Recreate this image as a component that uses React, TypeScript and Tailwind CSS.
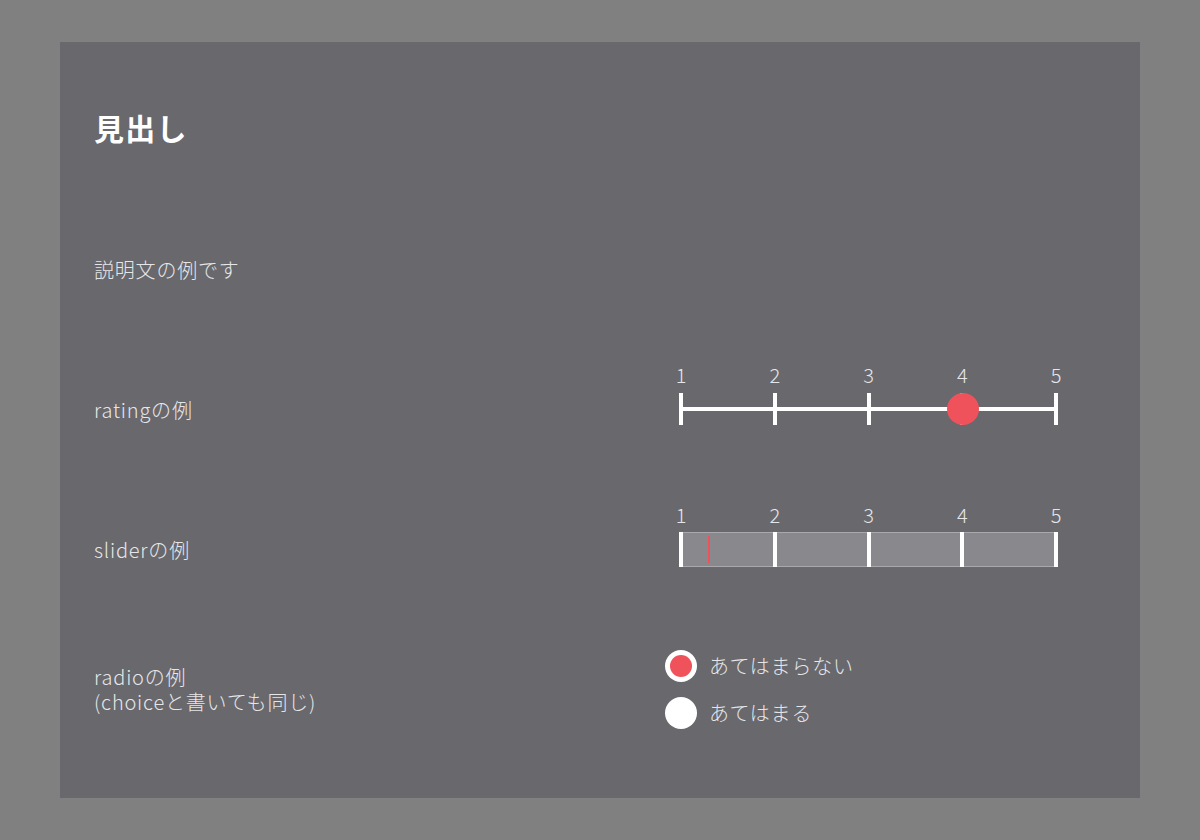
import React from 'react';

const ticks = [1, 2, 3, 4, 5];

const Row: React.FC<{ label: React.ReactNode; children?: React.ReactNode }> = ({ label, children }) => (
    <div className="flex h-[140px] items-center">
        <div className="w-[586px] shrink-0 text-[20px] font-light leading-[25px] tracking-[0.04em] text-[#e6e6e8]">{label}</div>
        <div className="flex-1">{children}</div>
    </div>
);

// tick numbers sitting above a 375px scale
const Numbers: React.FC<{ top: string }> = ({ top }) => (
    <div className={`absolute left-0 h-[24px] w-full ${top}`}>
        {ticks.map((n, i) => (
            <span
                key={n}
                className="absolute -translate-x-1/2 text-[20px] font-light leading-[24px] text-[#e6e6e8]"
                style={{ left: `${(i * 375) / 4 + 1}px` }}
            >
                {n}
            </span>
        ))}
    </div>
);

const Rating: React.FC<{ value: number }> = ({ value }) => (
    <div className="relative h-[32px] w-[378px]">
        <Numbers top="-top-[30px]" />
        <div className="absolute left-0 right-0 top-[14px] h-[4px] bg-white" />
        {ticks.map((n, i) => (
            <div key={n} className="absolute top-0 h-[32px] w-[4px] -translate-x-[1px] bg-white" style={{ left: `${(i * 375) / 4}px` }} />
        ))}
        <div
            className="absolute top-0 h-[32px] w-[32px] -translate-x-[14px] rounded-full bg-[#f0525c]"
            style={{ left: `${((value - 1) * 375) / 4}px` }}
        />
    </div>
);

const Slider: React.FC<{ value: number }> = ({ value }) => (
    <div className="relative h-[35px] w-[378px]">
        <Numbers top="-top-[29px]" />
        <div className="absolute inset-0 border border-[#a9a8ad] bg-[#89888d]" />
        {ticks.map((n, i) => (
            <div key={n} className="absolute top-0 h-[35px] w-[4px] -translate-x-[1px] bg-white" style={{ left: `${(i * 375) / 4}px` }} />
        ))}
        <div
            className="absolute top-[4px] h-[27px] w-[2px] bg-[#f0525c]"
            style={{ left: `${((value - 1) * 375) / 4}px` }}
        />
    </div>
);

const Radio: React.FC<{ checked?: boolean; label: string }> = ({ checked, label }) => (
    <div className="flex items-center gap-[12px]">
        <div className="flex h-[32px] w-[32px] items-center justify-center rounded-full bg-white">
            {checked && <div className="h-[22px] w-[22px] rounded-full bg-[#f0525c]" />}
        </div>
        <span className="text-[20px] font-light leading-[24px] tracking-[0.04em] text-[#e6e6e8]">{label}</span>
    </div>
);

export default function App() {
    return (
        <div
            className="min-h-[840px] bg-[#808080] px-[60px] py-[42px]"
            style={{ fontFamily: '"Noto Sans CJK JP", "Noto Sans", sans-serif' }}
        >
            <div className="h-[756px] bg-[#68686d] pl-[34px] pt-[17px]">
                <div className="flex h-[140px] items-center pb-[4px]">
                    <h1 className="text-[30px] font-bold leading-[36px] tracking-[0.04em] text-white">見出し</h1>
                </div>
                <Row label="説明文の例です" />
                <Row label="ratingの例">
                    <Rating value={4} />
                </Row>
                <Row label="sliderの例">
                    <Slider value={1.3} />
                </Row>
                <Row
                    label={
                        <>
                            radioの例
                            <br />
                            (choiceと書いても同じ)
                        </>
                    }
                >
                    <div className="-ml-[15px] flex flex-col gap-[15px]">
                        <Radio checked label="あてはまらない" />
                        <Radio label="あてはまる" />
                    </div>
                </Row>
            </div>
        </div>
    );
}
